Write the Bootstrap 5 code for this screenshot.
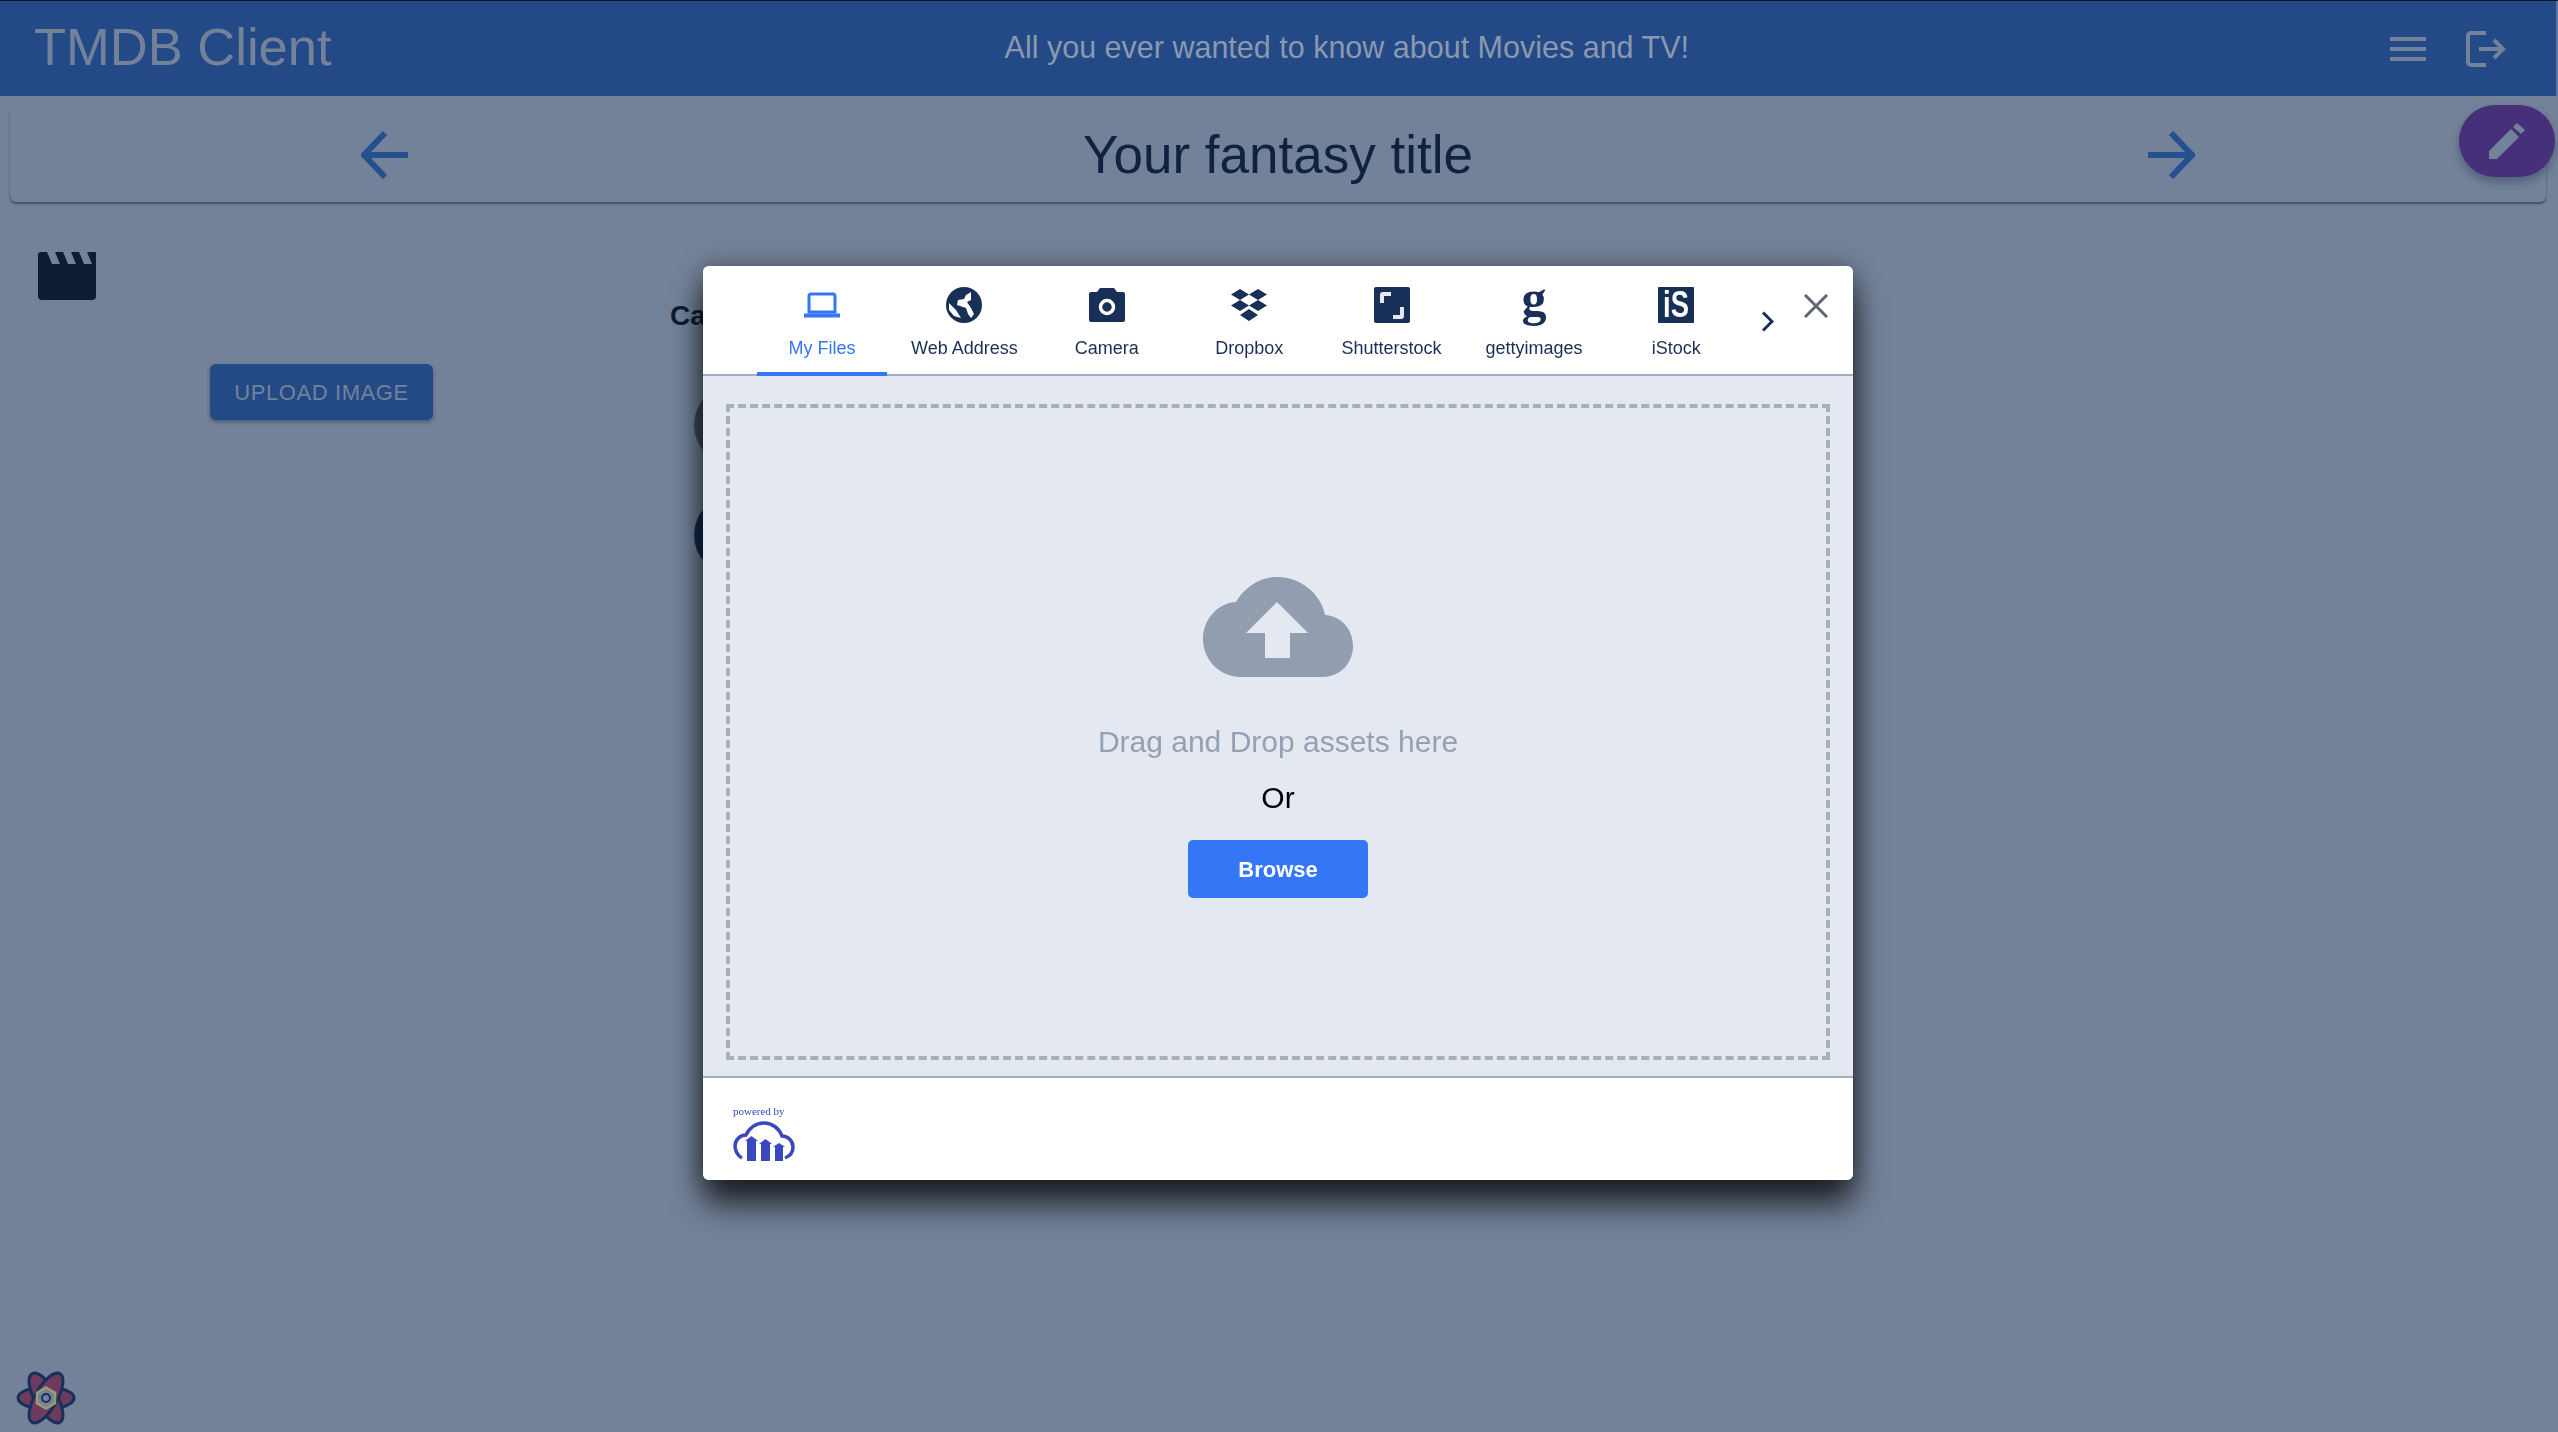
<!DOCTYPE html>
<html>
<head>
    <title>TMDB Client</title>
    <link href="https://cdn.jsdelivr.net/npm/bootstrap@5.3.0/dist/css/bootstrap.min.css" rel="stylesheet">
    <style>
        html, body { height: 100%; overflow: hidden; }
        body {
            font-family: "Liberation Sans", Arial, sans-serif;
            background-color: #748299;
            border-top: 1px solid #0b1220;
        }
        .top-bar {
            height: 95px;
            padding: 0 50px 0 34px;
            background-color: #234a87;
            border-right: 2px solid #5b74a8;
            color: #8b98ae;
        }
        .brand-name { font-size: 52.5px; color: #748299; line-height: 1; margin-top: -2px; }
        .tag-line { font-size: 30.5px; margin: -2px 28px 0 0; }
        .bar-icon { padding: 0 40px 0 0; }
        .title-card {
            margin: 12px 12px 0 10px;
            height: 94px;
            padding: 0 351px;
            background-color: #748299;
            border: 0;
            border-radius: 6px;
            box-shadow: 0 2px 2px rgba(20, 30, 60, .5), 0 0 1px rgba(20, 30, 60, .12);
        }
        .title-card h1 { font-size: 53px; margin: 0; color: #0f2340; }
        .fab-edit {
            position: fixed;
            top: 105px;
            right: 3px;
            width: 96px;
            height: 72px;
            border-radius: 36px;
            background-color: #47307a;
            box-shadow: 0 5px 10px rgba(20, 30, 60, .35);
        }
        .poster-col { width: 670px; padding: 50px 0 0 38px; }
        .upload-btn {
            margin: 64px 0 0 172px;
            width: 223px;
            height: 56px;
            font-size: 22px;
            letter-spacing: .6px;
            color: #748299;
            background-color: #234a87;
            border: 0;
            border-radius: 6px;
            box-shadow: 0 2px 4px rgba(20, 30, 60, .4);
        }
        .cast-col { padding-top: 97px; }
        .cast-col h5 { font-size: 28px; font-weight: 700; color: #0d1c33; margin: 0 0 52px; }
        .cast-face { width: 80px; height: 80px; border-radius: 50%; margin: 0 0 30px 24px; }
        .face-one { background-color: #3d4a60; }
        .face-two { background-color: #132c52; }

        .upload-overlay {
            position: fixed;
            top: 266px;
            left: 703px;
            width: 1150px;
            height: 914px;
            background-color: #e4e9f1;
            border: 0;
            border-radius: 6px;
            overflow: visible;
            box-shadow: 0 24px 32px rgba(0, 0, 0, .72), 0 0 26px rgba(0, 0, 0, .35);
        }
        .source-bar {
            height: 110px;
            padding: 0 0 0 54px;
            background-color: #fff;
            border-bottom: 2px solid #a3adbc;
            border-radius: 6px 6px 0 0;
        }
        .source-tab {
            width: 130px;
            height: 108px;
            margin-right: 12.4px;
            padding-top: 20px;
            text-align: center;
            font-size: 18px;
            color: #1a2f57;
            line-height: 1;
        }
        .source-tab.picked { color: #3576f6; border-bottom: 4px solid #3576f6; margin-bottom: -2px; height: 110px; }
        .tab-glyph { height: 38px; margin-bottom: 15px; display: flex; justify-content: center; align-items: center; }
        .getty-mark { font-family: "Liberation Serif", serif; font-weight: 700; font-size: 50px; line-height: 36px; color: #182f58; margin-top: -14px; }
        .istock-mark {
            width: 36px; height: 36px;
            background-color: #182f58;
            color: #fff;
            font-weight: 700;
            font-size: 36px;
            line-height: 36px;
            border-radius: 1px;
        }
        .istock-mark span { display: block; transform: scaleX(.76); }
        .tab-next { margin: 45px 0 0 7px; }
        .tab-close { position: absolute; top: 28px; right: 25px; line-height: 0; }
        .drop-area {
            height: 702px;
            padding: 28px 23px 16px 23px;
            border-bottom: 2px solid #a3adbc;
        }
        .drop-box {
            height: 100%;
            padding-top: 169px;
            border: 4px dashed #a6b0bd;
            text-align: center;
        }
        .drop-text { font-size: 30px; line-height: 36px; margin-top: 47px; color: #94a0b3; }
        .or-text { font-size: 30px; line-height: 36px; margin-top: 20px; color: #000; }
        .browse-btn {
            width: 180px;
            height: 58px;
            margin-top: 24px;
            font-size: 22px;
            font-weight: 700;
            color: #fff;
            background-color: #3576f6;
            border: 0;
            border-radius: 5px;
        }
        .powered-box { height: 102px; padding: 27px 0 0 30px; background-color: #fff; border-radius: 0 0 6px 6px; }
        .powered-text { font-family: "Liberation Serif", serif; font-size: 11px; line-height: 12px; color: #3a48c0; }
        .query-logo { position: fixed; left: 16px; bottom: 7px; line-height: 0; }
    </style>
</head>
<body>
    <nav class="navbar top-bar d-flex justify-content-between align-items-center flex-nowrap">
        <span class="brand-name">TMDB Client</span>
        <span class="tag-line">All you ever wanted to know about Movies and TV!</span>
        <div class="d-flex align-items-center">
            <span class="bar-icon">
                <svg width="36" height="24" viewBox="0 0 36 24" class="d-block"><path d="M0 0h36v4H0zM0 10h36v4H0zM0 20h36v4H0z" fill="#748299"/></svg>
            </span>
            <svg width="40" height="36" viewBox="0 0 40 36" fill="none" stroke="#748299" stroke-width="4" class="d-block">
                <path d="M20 2H5a3 3 0 0 0-3 3v26a3 3 0 0 0 3 3h15"/>
                <path d="M13 18h24M28 9l9 9-9 9"/>
            </svg>
        </div>
    </nav>

    <div class="card title-card flex-row justify-content-between align-items-center">
        <svg width="48" height="48" viewBox="0 0 48 48" fill="none" stroke="#25508f" stroke-width="6"><path d="M47 24H4M24 2 3 24l21 22"/></svg>
        <h1>Your fantasy title</h1>
        <svg width="48" height="48" viewBox="0 0 48 48" fill="none" stroke="#25508f" stroke-width="6"><path d="M1 24h43M24 2l21 22-21 22"/></svg>
    </div>

    <div class="fab-edit d-flex justify-content-center align-items-center">
        <svg width="36" height="36" viewBox="0 0 36 36" fill="#748299"><path d="M0 36v-8L22 6l8 8L8 36zM24 4l4-4 8 7-4 4z"/></svg>
    </div>

    <main class="d-flex">
        <div class="poster-col">
            <svg width="58" height="48" viewBox="0 0 58 48" class="d-block">
                <path d="M3 0h6l5 12h8L17 0h8l5 12h8L33 0h8l5 12h8L49 0h9v44a4 4 0 0 1-4 4H4a4 4 0 0 1-4-4V3a3 3 0 0 1 3-3z" fill="#0d1c33"/>
            </svg>
            <button class="btn upload-btn d-block p-0">UPLOAD IMAGE</button>
        </div>
        <div class="cast-col">
            <h5>Cast</h5>
            <div class="cast-face face-one"></div>
            <div class="cast-face face-two"></div>
        </div>
    </main>

    <div class="modal-content upload-overlay">
        <div class="source-bar d-flex">
            <div class="source-tab picked">
                <div class="tab-glyph">
                    <svg width="36" height="26" viewBox="0 0 36 26" fill="none" stroke="#3576f6" stroke-width="3"><path d="M5 20V4a2 2 0 0 1 2-2h22a2 2 0 0 1 2 2v16z"/><path d="M0 23.500h36" stroke-width="4"/></svg>
                </div>
                My Files
            </div>
            <div class="source-tab">
                <div class="tab-glyph">
                    <svg width="36" height="36" viewBox="0 0 36 36"><circle cx="18" cy="18" r="18" fill="#182f58"/><path d="M25 5v8l-4 2 4 6 3 6-3 4-3-4-2-6-9-3 1-5 6-1 2-4zM3 16l7 7 5 8-7-2-5-6z" fill="#fff"/></svg>
                </div>
                Web Address
            </div>
            <div class="source-tab">
                <div class="tab-glyph">
                    <svg width="36" height="34" viewBox="0 0 36 34"><path d="M11 0h14l3 4h6a2 2 0 0 1 2 2v26a2 2 0 0 1-2 2H2a2 2 0 0 1-2-2V6a2 2 0 0 1 2-2h6z" fill="#182f58"/><circle cx="18" cy="19" r="6.500" fill="none" stroke="#fff" stroke-width="3.500"/></svg>
                </div>
                Camera
            </div>
            <div class="source-tab">
                <div class="tab-glyph">
                    <svg width="36" height="32" viewBox="0 0 36 32" fill="#182f58"><path d="M9 0l9 5.500-9 5.500-9-5.500zM27 0l9 5.500-9 5.500-9-5.500zM9 11l9 5.500-9 5.500-9-5.500zM27 11l9 5.500-9 5.500-9-5.500zM18 20l9 6-9 6-9-6z"/></svg>
                </div>
                Dropbox
            </div>
            <div class="source-tab">
                <div class="tab-glyph">
                    <svg width="36" height="36" viewBox="0 0 36 36"><rect width="36" height="36" rx="2" fill="#182f58"/><path d="M6 16v-8a3 3 0 0 1 3-3h8v4h-7v7zM30 20v9a3 3 0 0 1-3 3h-8v-4h7v-8z" fill="#e4e9f1"/></svg>
                </div>
                Shutterstock
            </div>
            <div class="source-tab">
                <div class="tab-glyph"><span class="getty-mark">g</span></div>
                gettyimages
            </div>
            <div class="source-tab">
                <div class="tab-glyph"><div class="istock-mark"><span>iS</span></div></div>
                iStock
            </div>
            <svg class="tab-next" width="13" height="21" viewBox="0 0 13 21" fill="none" stroke="#182f58" stroke-width="3"><path d="M2 1.500l9 9-9 9"/></svg>
        </div>
        <span class="tab-close">
            <svg width="24" height="24" viewBox="0 0 24 24" stroke="#5f6771" stroke-width="3"><path d="M1 1l22 22M23 1L1 23"/></svg>
        </span>

        <div class="drop-area">
            <div class="drop-box">
                <svg width="150" height="100" viewBox="0 0 150 100" class="d-block mx-auto">
                    <path d="M38 100C17 100 0 83 0 62c0-20 15-36 33-37C42 10 57 0 74 0c24 0 44 17 48 38 16 1 28 14 28 31 0 17-13 31-30 31z" fill="#929db0"/>
                    <path d="M74 25l31 31H87v25H62V56H43z" fill="#e4e9f1"/>
                </svg>
                <div class="drop-text">Drag and Drop assets here</div>
                <div class="or-text">Or</div>
                <button class="btn browse-btn p-0">Browse</button>
            </div>
        </div>

        <div class="powered-box">
            <div class="powered-text">powered by</div>
            <svg width="62" height="40" viewBox="0 0 62 40" class="d-block mt-1">
                <path d="M9 37C5 35 2 30 2 25c0-6 5-11 11-11C16 7 23 2 31 2c8 0 15 5 18 13 6 0 11 5 11 11 0 5-3 9-8 11" fill="none" stroke="#3a48c0" stroke-width="3.500"/>
                <path d="M12 20l6.500-5 6.500 5h-2v20h-9V20zM26 23l6.500-5 6.500 5h-2v17h-9V23zM40 26l6-4 6 4h-2v14h-8V26z" fill="#3a48c0"/>
            </svg>
        </div>
    </div>

    <div class="query-logo">
        <svg width="60" height="54" viewBox="-30 -27 60 54">
            <g fill="#6f3a5e" stroke="#14315c" stroke-width="3">
                <ellipse rx="28" ry="11"/>
                <ellipse rx="28" ry="11" transform="rotate(60)"/>
                <ellipse rx="28" ry="11" transform="rotate(120)"/>
            </g>
            <path d="M0-10.500 9-5.200V5.200L0 10.500-9 5.200V-5.200z" fill="#748299" stroke="#9a9a6f" stroke-width="2.500"/>
            <circle r="4" fill="none" stroke="#14315c" stroke-width="2"/>
        </svg>
    </div>
    <script src="https://cdn.jsdelivr.net/npm/bootstrap@5.3.0/dist/js/bootstrap.bundle.min.js"></script>
</body>
</html>
